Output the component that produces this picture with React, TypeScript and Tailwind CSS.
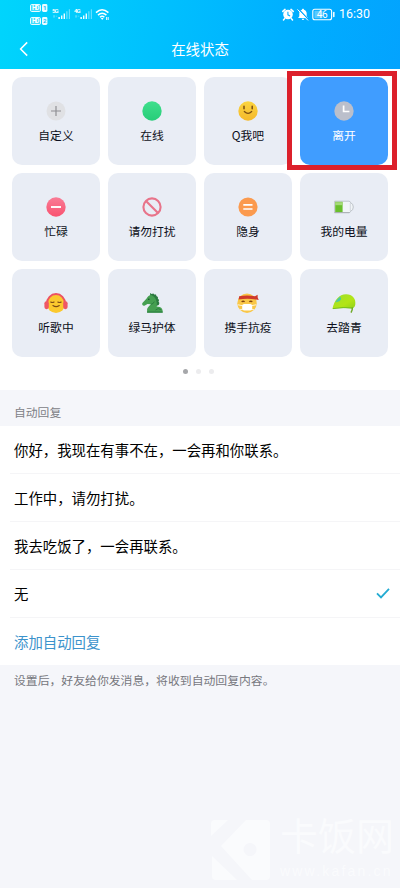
import type { ReactNode } from 'react';
import clsx from 'clsx';

interface Status {
  label: string;
  icon: ReactNode;
  active?: boolean;
}

const statuses: Status[] = [
  { label: '自定义', icon: <CustomIcon /> },
  { label: '在线', icon: <OnlineIcon /> },
  { label: 'Q我吧', icon: <SmileIcon /> },
  { label: '离开', icon: <AwayIcon />, active: true },
  { label: '忙碌', icon: <BusyIcon /> },
  { label: '请勿打扰', icon: <DndIcon /> },
  { label: '隐身', icon: <InvisibleIcon /> },
  { label: '我的电量', icon: <PowerIcon /> },
  { label: '听歌中', icon: <MusicIcon /> },
  { label: '绿马护体', icon: <HorseIcon /> },
  { label: '携手抗疫', icon: <MaskIcon /> },
  { label: '去踏青', icon: <LeafIcon /> },
];

const replies = ['你好，我现在有事不在，一会再和你联系。', '工作中，请勿打扰。', '我去吃饭了，一会再联系。', '无'];

function CustomIcon() {
  return (
    <svg width="24" height="24" viewBox="0 0 24 24">
      <circle cx="12" cy="12" r="9.5" fill="#e0e1e4" />
      <path d="M12 7v10M7 12h10" stroke="#8f9094" strokeWidth="1.2" />
    </svg>
  );
}

function OnlineIcon() {
  return (
    <svg width="24" height="24" viewBox="0 0 24 24">
      <defs>
        <linearGradient id="online" x1="0" y1="0" x2="0" y2="1">
          <stop stopColor="#3fdf8c" />
          <stop offset="1" stopColor="#27cd79" />
        </linearGradient>
      </defs>
      <circle cx="12" cy="12" r="9.7" fill="url(#online)" />
    </svg>
  );
}

function SmileIcon() {
  return (
    <svg width="24" height="24" viewBox="0 0 24 24">
      <defs>
        <linearGradient id="smile" x1="0" y1="0" x2="0" y2="1">
          <stop stopColor="#fbd440" />
          <stop offset="1" stopColor="#f5b92b" />
        </linearGradient>
      </defs>
      <circle cx="12" cy="12" r="9.7" fill="url(#smile)" />
      <path d="M8 7.2v2.6M16.2 7.2v2.6" stroke="#7a4d12" strokeWidth="1.5" strokeLinecap="round" />
      <path d="M8.3 12.5q3.8 3.6 7.4 0" stroke="#7a4d12" strokeWidth="1.2" fill="none" strokeLinecap="round" />
    </svg>
  );
}

function AwayIcon() {
  return (
    <svg width="24" height="24" viewBox="0 0 24 24">
      <circle cx="12" cy="12" r="9.7" fill="#bbbfcb" />
      <path d="M11.6 6.5v6h5.8" stroke="#fff" strokeWidth="1.7" fill="none" />
    </svg>
  );
}

function BusyIcon() {
  return (
    <svg width="24" height="24" viewBox="0 0 24 24">
      <defs>
        <linearGradient id="busy" x1="0" y1="0" x2="0" y2="1">
          <stop stopColor="#f97c96" />
          <stop offset="1" stopColor="#f9526f" />
        </linearGradient>
      </defs>
      <circle cx="12" cy="12" r="9.7" fill="url(#busy)" />
      <path d="M7 12h10" stroke="#fff" strokeWidth="1.9" />
    </svg>
  );
}

function DndIcon() {
  return (
    <svg width="24" height="24" viewBox="0 0 24 24" fill="none" stroke="#e8748a" strokeWidth="2.1">
      <circle cx="12" cy="12" r="8.6" />
      <path d="M6 6l12 12" />
    </svg>
  );
}

function InvisibleIcon() {
  return (
    <svg width="24" height="24" viewBox="0 0 24 24">
      <circle cx="12" cy="12" r="9.6" fill="#fb9a4e" />
      <path d="M7.3 9.8h9.2M7.3 14h9.2" stroke="#fff" strokeWidth="1.7" />
    </svg>
  );
}

function PowerIcon() {
  return (
    <svg width="24" height="24" viewBox="0 0 24 24">
      <path d="M2.7 6.2h14.2q1.4 0 1.8 1.6 2.6.8 2.6 4.2t-2.6 4.2q-.4 1.5-1.8 1.5H2.7z" fill="#f1f5f7" stroke="#b9bec4" strokeWidth=".9" />
      <path d="M18.3 8v8" stroke="#c9ced6" strokeWidth=".8" />
      <path d="M3.2 6.8h7.4v10.4H3.2z" fill="#69bf2c" />
      <path d="M3.2 7.2h7.4v3H3.2z" fill="#a5da78" />
      <path d="M2.5 17.6h15" stroke="#a4a8ad" strokeWidth=".8" />
    </svg>
  );
}

function MusicIcon() {
  return (
    <svg width="26" height="24" viewBox="0 0 26 24">
      <circle cx="13" cy="12.8" r="9.2" fill="#fbc92e" />
      <path d="M4 12.5a9 9.4 0 0 1 18 0" fill="none" stroke="#ed5361" strokeWidth="2" />
      <rect x="1.4" y="10.2" width="4.4" height="8" rx="2.1" fill="#ef5765" />
      <rect x="20.2" y="10.2" width="4.4" height="8" rx="2.1" fill="#ef5765" />
      <g stroke="#7d4c16" strokeWidth="1.1" fill="none" strokeLinecap="round">
        <path d="M7.7 11q1.6 1 3.4 0M14.8 11q1.7 1 3.4 0M9.9 14.5q3.2 2.3 6.4 0" />
      </g>
    </svg>
  );
}

function HorseIcon() {
  return (
    <svg width="24" height="24" viewBox="0 0 24 24">
      <path
        d="M10 2l1.6 1 1.8-.6.8 1.1 1.8.1.4 1.5 1.5.9v1.7l1.2 1.3-.6 1.5.9 1.4-.7 2-5 2-3.4-10z"
        fill="#2b7a40"
      />
      <path
        d="M10.8 3.8c-2.2.8-3.1 2-4.2 3.8L2.4 12c-.8 1.3.4 3.1 2 2.7l3.1-1.6 3.3.1c-1.4 1.9-4 3.3-3.7 6v2.5h15.6c.3-2.9-.8-5.4-3-5.8l-3-.3c.8-5-1-9.8-5.9-11.8z"
        fill="#459f51"
      />
      <path d="M15.5 19q2.8-2.6 5.3-.4M10.9 13.4q2.6-.4 3.4-2.8M7.1 21h15.5" stroke="#2b7d40" strokeWidth="1" fill="none" />
      <circle cx="8.8" cy="8.2" r=".8" fill="#164f2a" />
    </svg>
  );
}

function MaskIcon() {
  return (
    <svg width="26" height="24" viewBox="0 0 26 24">
      <circle cx="12" cy="12.2" r="9.7" fill="#f9c748" />
      <path d="M3 13.8l5 1M21 13.8l-5 1M4.8 18.8l4-.8M19.2 18.8l-4-.8" stroke="#fff4d5" strokeWidth="1" />
      <rect x="7.2" y="13" width="10" height="6.6" rx="2" fill="#fff" />
      <path d="M6.6 10.8q1.5-1.2 3 0M14.3 10.8q1.5-1.2 3 0" stroke="#83440f" strokeWidth="1.4" fill="none" />
      <path d="M4.2 5.2Q12 3.8 20 5.2l2.6-1.4.1 2.7 1 2.5-2.8-.5q-8.5-1.6-17.3 0z" fill="#cf3a2b" />
    </svg>
  );
}

function LeafIcon() {
  return (
    <svg width="26" height="24" viewBox="0 0 26 24">
      <defs>
        <linearGradient id="leaf" x1="0" y1="0" x2="1" y2="1">
          <stop stopColor="#9be02e" />
          <stop offset=".6" stopColor="#b3e516" />
          <stop offset="1" stopColor="#8fd01a" />
        </linearGradient>
      </defs>
      <path d="M1.4 18C3.4 8.8 8.4 3.2 15 3.3c6.4-.1 10 4.4 9.3 10-.2 2-1 3.2-2.6 4.1q-8.8-1-20.3.6z" fill="url(#leaf)" />
      <path d="M4.4 11.3Q6 7.9 9 5.8c1.8 1 1 3.7-.7 4.4-1.1.7-2 .3-3.9 1.1z" fill="#4cc9a0" />
      <path d="M21.4 16.4q.2 2.7-1.4 5.2" stroke="#6fa928" strokeWidth="1.5" fill="none" />
      <path d="M2 17.6q10.4-1.8 19.8-.5" stroke="#65b51e" strokeWidth=".8" fill="none" />
    </svg>
  );
}

function SignalIcon({ label }: { label: string }) {
  return (
    <svg width="19" height="14" viewBox="0 0 19 14" fill="#fff">
      <text x="0" y="5.5" fontSize="6" fontWeight="600" fontFamily="Roboto, sans-serif" textLength="6.5">
        {label}
      </text>
      <path d="M6.4 10h1.5v2H6.4zM9 8.6h1.4V12H9zM11.6 6.4H13V12h-1.4z" opacity=".95" />
      <path d="M14.2 4.2h1.3V12h-1.3zM16.8 2.2h1.2V12h-1.2z" opacity=".4" />
      <path d="M1.3 9.2h2M4.2 9.2h1M2 8v3" stroke="#fff" strokeWidth=".8" opacity=".4" />
    </svg>
  );
}

function HdBadge({ sim }: { sim: string }) {
  return (
    <svg width="18" height="8" viewBox="0 0 18 8">
      <rect x=".5" y=".5" width="10" height="7" rx="1.2" fill="#fff" fillOpacity=".25" stroke="#fff" strokeWidth=".9" />
      <text x="2" y="6.3" fontSize="6.3" fontWeight="700" fill="#fff" fontFamily="Roboto, sans-serif" textLength="7.4">
        HD
      </text>
      <rect x="12" y="0" width="5.4" height="8" rx="1.4" fill="#fff" fillOpacity=".92" />
      <text x="13.1" y="6.3" fontSize="6.2" fontWeight="700" fill="#16bdf5" fontFamily="Roboto, sans-serif">
        {sim}
      </text>
    </svg>
  );
}

function StatusBar() {
  return (
    <div className="flex h-7 items-center justify-between pr-[30px] pl-[30px]">
      <div className="flex items-center">
        <div className="mr-1 flex flex-col gap-[5px]">
          <HdBadge sim="1" />
          <HdBadge sim="2" />
        </div>
        <div className="flex items-center gap-[3px]">
          <SignalIcon label="5G" />
          <SignalIcon label="4G" />
        </div>
        <svg className="ml-0.5" width="15" height="13" viewBox="0 0 15 13" fill="none" stroke="#fff" strokeWidth="1.5">
          <path d="M1 4.6q6-5.6 12.4 0M3 7.1q4.2-3.8 8.4 0M5 9.3q2.2-2 4.4 0" />
          <path d="M5.8 10.1l1.4 1.8 1.4-1.8z" fill="#fff" stroke="none" />
          <path d="M11.6 9v3M13.2 9v3" strokeWidth=".9" />
        </svg>
      </div>
      <div className="flex items-center">
        <svg width="12" height="13" viewBox="0 0 12 13">
          <circle cx="6" cy="6.5" r="4.8" fill="#fff" />
          <path d="M.8 3.4L3 1.4M11.2 3.4L9 1.4M2.6 10.6L1.5 12M9.4 10.6l1.1 1.4" stroke="#fff" strokeWidth="1.5" strokeLinecap="round" />
          <path d="M5.9 3.8v3l2.2 1.2" stroke="#0baeff" strokeWidth="1.1" fill="none" />
        </svg>
        <svg className="ml-[3px]" width="12" height="13" viewBox="0 0 12 13">
          <path d="M6 .8c.7 0 1 .4 1 1 1.7.5 2.7 2 2.7 3.8v2.7l1.2 1.6H1.1l1.2-1.6V5.6c0-1.8 1-3.3 2.7-3.8 0-.6.3-1 1-1zM4.6 10.7h2.8q-.4 1.3-1.4 1.3t-1.4-1.3z" fill="#fff" />
          <path d="M1.3.8l10.4 11" stroke="#08a9ff" strokeWidth="1.3" />
          <path d="M.5 1.4l10.5 11" stroke="#fff" strokeWidth="1" />
        </svg>
        <svg className="ml-[3px]" width="24" height="13" viewBox="0 0 24 13">
          <rect x=".8" y="1.2" width="18.8" height="10.6" rx="2" fill="none" stroke="#fff" strokeWidth="1.1" />
          <rect x="2.4" y="2.8" width="8.2" height="7.4" rx=".6" fill="#fff" opacity=".35" />
          <text x="4.8" y="10.1" fontSize="10" fill="#fff" fontFamily="Roboto, sans-serif" textLength="10.8">
            46
          </text>
          <path d="M21.8 4.4v4.2" stroke="#fff" strokeWidth="1.5" strokeLinecap="round" />
        </svg>
        <span className="ml-[3px] w-[31px] font-['Roboto',sans-serif] text-[12.4px] leading-none text-white">16:30</span>
      </div>
    </div>
  );
}

function Header() {
  return (
    <header className="h-[69px] bg-[linear-gradient(100deg,#00d5fc_0%,#00c0fe_40%,#00adff_75%,#03a3fe_100%)]">
      <StatusBar />
      <div className="grid h-[41px] grid-cols-3 items-center px-[19px] text-white">
        <svg width="10" height="16" viewBox="0 0 10 16" fill="none" stroke="#fff" strokeWidth="1.5">
          <path d="M8.2 1.4L1.6 8l6.6 6.6" />
        </svg>
        <h1 className="text-center text-[14.4px]">在线状态</h1>
      </div>
    </header>
  );
}

function StatusTile({ label, icon, active }: Status) {
  return (
    <button
      className={clsx(
        'relative flex h-[88px] flex-col items-center rounded-[10px] pt-[22px] text-[11.8px] leading-[18px]',
        active ? 'bg-[#409dff] text-white' : 'bg-[#e9edf5] text-[#0d1020]',
      )}
    >
      {icon}
      <span className="mt-[3px] whitespace-nowrap">{label}</span>
      {active && <span className="absolute -top-[6px] -right-[9px] -bottom-[5px] -left-[13px] border-[5px] border-[#dc202b]" />}
    </button>
  );
}

function Watermark() {
  return (
    <div className="mt-auto flex h-[72px] items-start pl-[211px] text-[#fafbfd]">
      <svg className="mt-1 shrink-0" width="60" height="60" viewBox="0 0 60 60" fill="#fafbfd">
        <path d="M0 4Q0 0 4 0h13L0 16z" />
        <path fillRule="evenodd" d="M35 0h20q4 0 4 4v52q0 4-4 4H41L10 26zM39 23a6.5 6.5 0 1 0 .1 0z" />
        <path d="M1 36l25 24H5q-4 0-4-4z" />
      </svg>
      <div className="ml-[9px] flex flex-col">
        <span className="-mt-0.5 text-[38px] leading-[40px]">卡饭网</span>
        <span className="mt-[9px] font-['Liberation_Sans'] text-[14px] leading-4 tracking-[2.2px]">www.kafan.cn</span>
      </div>
    </div>
  );
}

export default function App() {
  return (
    <div className="flex h-[888px] w-[400px] flex-col overflow-hidden bg-[#f5f6fa] font-['Noto_Sans_CJK_SC',sans-serif]">
      <Header />

      <section className="h-[321px] bg-white px-3 pt-2">
        <div className="grid grid-cols-4 gap-2">
          {statuses.map((status) => (
            <StatusTile key={status.label} {...status} />
          ))}
        </div>
        <div className="mt-3 flex justify-center gap-[8px] pr-[3px]">
          <span className="size-[5px] rounded-full bg-[#a6a7aa]" />
          <span className="size-[5px] rounded-full bg-[#ececee]" />
          <span className="size-[5px] rounded-full bg-[#ececee]" />
        </div>
      </section>

      <h2 className="h-9 pt-2 pl-[14px] text-[11.8px] leading-[27px] text-[#808187]">自动回复</h2>

      <ul className="bg-white">
        {replies.map((reply) => (
          <li key={reply} className="ml-[10px] flex h-12 items-center justify-between border-b border-[#f5f5f7] pr-[10px] pl-1">
            <span className="text-[14.4px] text-black">{reply}</span>
            {reply === '无' && (
              <svg width="14" height="12" viewBox="0 0 14 12" fill="none" stroke="#23abd2" strokeWidth="1.8">
                <path d="M1 5.4l4 4 8-8.5" />
              </svg>
            )}
          </li>
        ))}
        <li className="flex h-[47px] items-center pl-[14px] text-[14.4px] text-[#3c93cc]">添加自动回复</li>
      </ul>

      <p className="pt-[6px] pl-[14px] text-[11.85px] leading-[18px] text-[#77787e]">设置后，好友给你发消息，将收到自动回复内容。</p>

      <Watermark />
    </div>
  );
}
